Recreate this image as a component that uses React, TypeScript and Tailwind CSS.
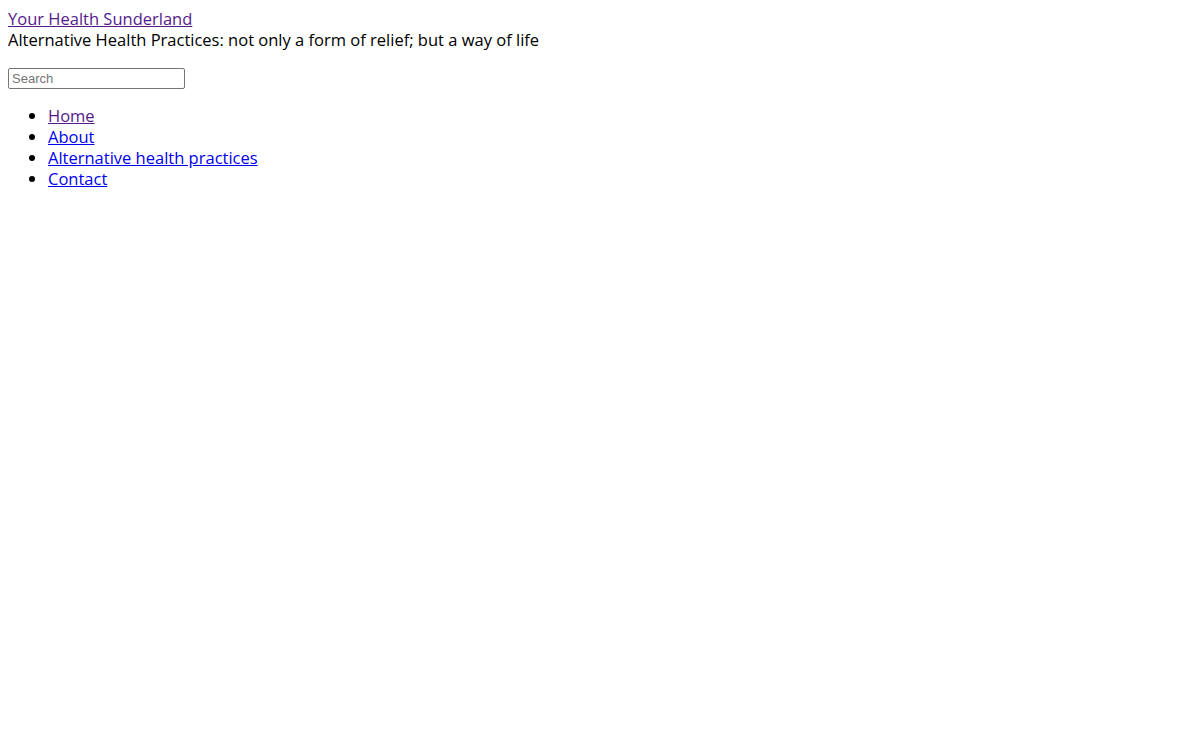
const navLinks = [
  { label: "Home", visited: true },
  { label: "About", visited: false },
  { label: "Alternative health practices", visited: false },
  { label: "Contact", visited: false },
];

export default function App() {
  return (
    <div className="min-h-[740px] bg-white p-2 font-['Open_Sans','Noto_Sans',sans-serif] text-[16.5px] leading-[21px] text-black">
      <header>
        <a href="#" className="text-[#551a8b] underline">
          Your Health Sunderland
        </a>
        <div>Alternative Health Practices: not only a form of relief; but a way of life</div>
      </header>

      <form className="mt-[18px]" onSubmit={(e) => e.preventDefault()}>
        <input
          type="text"
          placeholder="Search"
          className="block h-[21px] w-[177px] rounded-[2px] border border-[#767676] px-[3px] font-['Liberation_Sans',Arial,sans-serif] text-[13px] text-black placeholder:text-[#757575]"
        />
      </form>

      <ul className="mt-4 list-disc pl-10">
        {navLinks.map((link) => (
          <li key={link.label}>
            <a
              href="#"
              className={link.visited ? "text-[#551a8b] underline" : "text-[#0000ee] underline"}
            >
              {link.label}
            </a>
          </li>
        ))}
      </ul>
    </div>
  );
}
